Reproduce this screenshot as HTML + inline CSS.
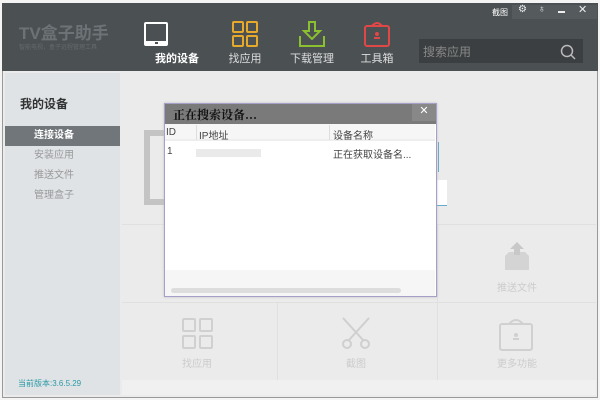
<!DOCTYPE html>
<html><head><meta charset="utf-8"><style>
*{margin:0;padding:0;box-sizing:border-box}
body{width:600px;height:400px;overflow:hidden;background:#f4f4f4;font-family:"Liberation Sans","Noto Sans CJK SC",sans-serif;position:relative}
.abs{position:absolute}
.win{left:2px;top:3px;width:596px;height:395px;background:#ebebeb;border:1px solid #999}
.hdr{left:2px;top:3px;width:596px;height:68px;background:#4b5053}
.navt{font-size:11px;color:#ddd;text-align:center;width:70px}
.side{left:5px;top:73px;width:115px;height:322px;background:#dfe3e6}
.si{left:5px;width:115px;height:20px;font-size:10px;color:#999;padding-left:29px;line-height:20px}
.gl{background:#e0e0e0}
.gt{font-size:10px;color:#ccc;text-align:center;width:80px}
</style></head><body>
<div class="abs win"></div>
<div class="abs hdr"></div>
<div class="abs" style="left:19px;top:19px;font-size:17px;font-weight:bold;color:#6c7275">TV盒子助手</div>
<div class="abs" style="left:19px;top:42px;font-size:6px;color:#666a6d">智能电视，盒子远程管理工具</div>
<!-- nav icons -->
<div class="abs" style="left:144px;top:22px;width:24px;height:24px;border:2px solid #fff;border-bottom-width:5px;border-radius:2px"></div>
<div class="abs" style="left:155px;top:42px;width:3px;height:2px;background:#4b5053"></div>
<div class="abs navt" style="left:142px;top:50px;color:#fff;font-weight:bold">我的设备</div>
<svg class="abs" style="left:232px;top:21px" width="26" height="26"><g fill="none" stroke="#e6a92a" stroke-width="2"><rect x="1" y="1" width="10" height="10" rx="1"/><rect x="15" y="1" width="10" height="10" rx="1"/><rect x="1" y="15" width="10" height="10" rx="1"/><rect x="15" y="15" width="10" height="10" rx="1"/></g></svg>
<div class="abs navt" style="left:210px;top:50px">找应用</div>
<svg class="abs" style="left:299px;top:21px" width="26" height="26"><g fill="none" stroke="#8bc02e" stroke-width="2"><path d="M10 1h6v9h5l-8 8-8-8h5z"/><path d="M1 15v10h24v-10"/></g></svg>
<div class="abs navt" style="left:277px;top:50px">下载管理</div>
<svg class="abs" style="left:363px;top:20px" width="28" height="28"><g fill="none" stroke="#e04848" stroke-width="2"><rect x="2" y="6" width="24" height="20" rx="2"/><path d="M9 6q5-6 10 0"/></g><circle cx="14" cy="14" r="2" fill="#e04848"/><rect x="11" y="17" width="6" height="2" fill="#e04848"/></svg>
<div class="abs navt" style="left:342px;top:50px">工具箱</div>
<div class="abs" style="left:419px;top:39px;width:164px;height:24px;background:#3b3f41"></div>
<div class="abs" style="left:423px;top:43px;font-size:12px;color:#888">搜索应用</div>
<svg class="abs" style="left:560px;top:44px" width="16" height="16"><circle cx="7" cy="7" r="5.5" fill="none" stroke="#bbb" stroke-width="1.5"/><path d="M11 11l4 4" stroke="#bbb" stroke-width="1.5"/></svg>
<div class="abs" style="left:492px;top:7px;font-size:8px;color:#fff">截图</div>
<div class="abs" style="left:512px;top:5px;width:85px;height:14px;background:#555a5d"></div>
<div class="abs" style="left:518px;top:4px;font-size:10px;color:#eee">⚙</div>
<div class="abs" style="left:538px;top:4px;font-size:10px;color:#eee">♁</div>
<div class="abs" style="left:558px;top:11px;width:7px;height:2px;background:#eee"></div>
<div class="abs" style="left:578px;top:3px;font-size:11px;color:#eee">✕</div>
<!-- sidebar -->
<div class="abs side"></div>
<div class="abs" style="left:20px;top:95px;font-size:12px;font-weight:bold;color:#333">我的设备</div>
<div class="abs si" style="top:126px;background:#70767a;color:#fff;font-weight:bold">连接设备</div>
<div class="abs si" style="top:146px">安装应用</div>
<div class="abs si" style="top:166px">推送文件</div>
<div class="abs si" style="top:186px">管理盒子</div>
<div class="abs" style="left:18px;top:378px;font-size:8px;color:#2a9aa5">当前版本:3.6.5.29</div>
<!-- main bg -->
<div class="abs gl" style="left:122px;top:224px;width:474px;height:1px"></div>
<div class="abs gl" style="left:122px;top:302px;width:474px;height:1px"></div>
<div class="abs gl" style="left:277px;top:302px;width:1px;height:80px"></div>
<div class="abs gl" style="left:437px;top:225px;width:1px;height:157px"></div>
<div class="abs" style="left:122px;top:380px;width:474px;height:15px;background:#f0f0f0"></div>
<div class="abs" style="left:144px;top:130px;width:24px;height:75px;border:6px solid #c4c4c4;border-right:none"></div>
<div class="abs" style="left:436px;top:142px;width:3px;height:30px;border-right:1px solid #6ac"></div>
<div class="abs" style="left:436px;top:180px;width:11px;height:26px;background:#fff;border-bottom:1px solid #6ac"></div>
<svg class="abs" style="left:502px;top:240px" width="30" height="32"><path d="M3 16v14h24v-14l-4-4h-16z" fill="#d4d4d4"/><path d="M15 2l-7 7h4v6h6v-6h4z" fill="#c8c8c8"/></svg>
<div class="abs gt" style="left:477px;top:279px">推送文件</div>
<svg class="abs" style="left:182px;top:318px" width="32" height="32"><g fill="none" stroke="#d0d0d0" stroke-width="2"><rect x="1" y="1" width="12" height="12" rx="1"/><rect x="18" y="1" width="12" height="12" rx="1"/><rect x="1" y="18" width="12" height="12" rx="1"/><rect x="18" y="18" width="12" height="12" rx="1"/></g></svg>
<div class="abs gt" style="left:157px;top:355px">找应用</div>
<svg class="abs" style="left:340px;top:317px" width="32" height="32"><g fill="none" stroke="#cfcfcf" stroke-width="2"><path d="M3 1l20 22M29 1l-20 22"/><circle cx="7" cy="27" r="4"/><circle cx="25" cy="27" r="4"/></g></svg>
<div class="abs gt" style="left:316px;top:355px">截图</div>
<svg class="abs" style="left:498px;top:316px" width="36" height="36"><g fill="none" stroke="#d0d0d0" stroke-width="2"><rect x="2" y="8" width="32" height="26" rx="2"/><path d="M11 8q7-8 14 0"/></g><circle cx="18" cy="19" r="2" fill="#d0d0d0"/><rect x="15" y="22" width="6" height="2" fill="#d0d0d0"/></svg>
<div class="abs gt" style="left:477px;top:355px">更多功能</div>
<!-- dialog -->
<div class="abs" style="left:164px;top:103px;width:273px;height:194px;border:1px solid #a79fc8;background:#fff;box-shadow:0 0 2px #bbb"></div>
<div class="abs" style="left:165px;top:104px;width:271px;height:20px;background:#7a7a7a"></div>
<div class="abs" style="left:173px;top:106px;font-size:12px;font-weight:bold;color:#111;font-family:'Noto Serif CJK SC','Liberation Serif',serif">正在搜索设备...</div>
<div class="abs" style="left:412px;top:104px;width:24px;height:17px;background:#888;color:#fff;font-size:11px;text-align:center;line-height:15px">✕</div>
<div class="abs" style="left:165px;top:124px;width:270px;height:17px;background:#f6f6f6;border-bottom:2px solid #eee"></div>
<div class="abs" style="left:196px;top:125px;width:1px;height:15px;background:#ddd"></div>
<div class="abs" style="left:329px;top:125px;width:1px;height:15px;background:#ddd"></div>
<div class="abs" style="left:166px;top:127px;font-size:10px;color:#444">ID</div>
<div class="abs" style="left:199px;top:127px;font-size:10px;color:#444">IP地址</div>
<div class="abs" style="left:333px;top:127px;font-size:10px;color:#444">设备名称</div>
<div class="abs" style="left:167px;top:146px;font-size:10px;color:#444">1</div>
<div class="abs" style="left:196px;top:149px;width:65px;height:8px;background:#eaeaea"></div>
<div class="abs" style="left:333px;top:146px;font-size:10px;color:#444">正在获取设备名...</div>
<div class="abs" style="left:165px;top:270px;width:270px;height:26px;background:#f6f6f6"></div>
<div class="abs" style="left:171px;top:288px;width:230px;height:5px;background:#ddd;border-radius:3px"></div>
</body></html>
